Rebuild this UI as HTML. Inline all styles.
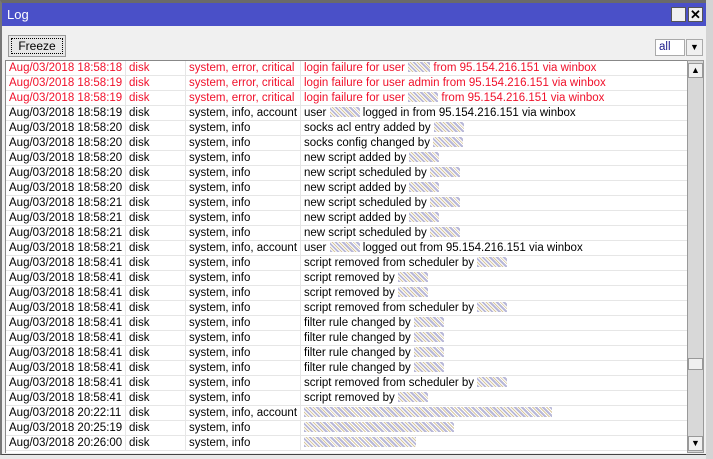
<!DOCTYPE html>
<html><head><meta charset="utf-8"><style>
*{margin:0;padding:0;box-sizing:border-box}
body{width:713px;height:459px;overflow:hidden;background:#e8e8e8;font-family:"Liberation Sans",Arial,sans-serif;font-size:11.5px;position:relative}
.win{position:absolute;left:0;top:0;width:707px;height:455px;background:#f0f0f0;border:1px solid #444;border-top:3px solid #6a6a6a;border-left:2px solid #777}
.title{position:absolute;left:0;top:0;right:0;height:23px;background:#4a50c8;color:#fff;font-size:13px;padding:4px 5px}
.tb{position:absolute;top:4px;width:15px;height:15px;background:#f0f0f0;border:1px solid #555}
.freeze{position:absolute;left:6px;top:32px;width:58px;height:22px;background:#e6e6e6;border:1px solid #999;text-align:center;line-height:20px;font-size:12px}
.freeze i{position:absolute;inset:2px;border:1px dotted #000}
.sel{position:absolute;left:653px;top:36px;width:30px;height:17px;background:#fff;border:1px solid #aaa;padding:1px 3px;color:#1a1a8a}
.selb{position:absolute;left:684px;top:36px;width:17px;height:17px;background:#f0f0f0;border:1px solid #aaa;font-size:9px;text-align:center;line-height:15px}
.list{position:absolute;left:3px;top:57px;width:682px;height:393px;background:#fff;border-top:1px solid #888;border-left:1px solid #888;overflow:hidden}
.row{height:15px;border-bottom:1px solid #e6e6e6;white-space:nowrap;position:relative;line-height:14px}
.row span{position:absolute;top:0;height:15px;border-right:1px solid #e6e6e6;padding-left:3px}
.c1{left:0;width:120px}.c2{left:120px;width:60px}.c3{left:180px;width:115px}.c4{left:295px;width:390px;border:none!important}
.red{color:#f0102a}
.r{display:inline-block;width:30px;height:10px;vertical-align:-1px;background:repeating-linear-gradient(45deg,#b8b8d8 0 2px,#fff 2px 3px,#d8c8a0 3px 4px,#fff 4px 5px)}
.sb{position:absolute;left:685px;top:57px;width:17px;height:393px;background:#d8d8d8;border:1px solid #999}
.sbb{position:absolute;left:0;width:15px;height:15px;background:#f0f0f0;border:1px solid #999;font-size:9px;text-align:center;line-height:13px}
</style></head><body>
<div class="win">
<div class="title">Log<div class="tb" style="left:669px"></div><div class="tb" style="left:686px;text-align:center;line-height:13px;color:#000;font-weight:bold">✕</div></div>
<div class="freeze"><i></i>Freeze</div>
<div class="sel">all</div><div class="selb">▼</div>
<div class="list">
<div class="row red"><span class="c1">Aug/03/2018 18:58:18</span><span class="c2">disk</span><span class="c3">system, error, critical</span><span class="c4">login failure for user <i class="r" style="width:22px"></i> from 95.154.216.151 via winbox</span></div>
<div class="row red"><span class="c1">Aug/03/2018 18:58:19</span><span class="c2">disk</span><span class="c3">system, error, critical</span><span class="c4">login failure for user admin from 95.154.216.151 via winbox</span></div>
<div class="row red"><span class="c1">Aug/03/2018 18:58:19</span><span class="c2">disk</span><span class="c3">system, error, critical</span><span class="c4">login failure for user <i class="r"></i> from 95.154.216.151 via winbox</span></div>
<div class="row"><span class="c1">Aug/03/2018 18:58:19</span><span class="c2">disk</span><span class="c3">system, info, account</span><span class="c4">user <i class="r"></i> logged in from 95.154.216.151 via winbox</span></div>
<div class="row"><span class="c1">Aug/03/2018 18:58:20</span><span class="c2">disk</span><span class="c3">system, info</span><span class="c4">socks acl entry added by <i class="r"></i></span></div>
<div class="row"><span class="c1">Aug/03/2018 18:58:20</span><span class="c2">disk</span><span class="c3">system, info</span><span class="c4">socks config changed by <i class="r"></i></span></div>
<div class="row"><span class="c1">Aug/03/2018 18:58:20</span><span class="c2">disk</span><span class="c3">system, info</span><span class="c4">new script added by <i class="r"></i></span></div>
<div class="row"><span class="c1">Aug/03/2018 18:58:20</span><span class="c2">disk</span><span class="c3">system, info</span><span class="c4">new script scheduled by <i class="r"></i></span></div>
<div class="row"><span class="c1">Aug/03/2018 18:58:20</span><span class="c2">disk</span><span class="c3">system, info</span><span class="c4">new script added by <i class="r"></i></span></div>
<div class="row"><span class="c1">Aug/03/2018 18:58:21</span><span class="c2">disk</span><span class="c3">system, info</span><span class="c4">new script scheduled by <i class="r"></i></span></div>
<div class="row"><span class="c1">Aug/03/2018 18:58:21</span><span class="c2">disk</span><span class="c3">system, info</span><span class="c4">new script added by <i class="r"></i></span></div>
<div class="row"><span class="c1">Aug/03/2018 18:58:21</span><span class="c2">disk</span><span class="c3">system, info</span><span class="c4">new script scheduled by <i class="r"></i></span></div>
<div class="row"><span class="c1">Aug/03/2018 18:58:21</span><span class="c2">disk</span><span class="c3">system, info, account</span><span class="c4">user <i class="r"></i> logged out from 95.154.216.151 via winbox</span></div>
<div class="row"><span class="c1">Aug/03/2018 18:58:41</span><span class="c2">disk</span><span class="c3">system, info</span><span class="c4">script removed from scheduler by <i class="r"></i></span></div>
<div class="row"><span class="c1">Aug/03/2018 18:58:41</span><span class="c2">disk</span><span class="c3">system, info</span><span class="c4">script removed by <i class="r"></i></span></div>
<div class="row"><span class="c1">Aug/03/2018 18:58:41</span><span class="c2">disk</span><span class="c3">system, info</span><span class="c4">script removed by <i class="r"></i></span></div>
<div class="row"><span class="c1">Aug/03/2018 18:58:41</span><span class="c2">disk</span><span class="c3">system, info</span><span class="c4">script removed from scheduler by <i class="r"></i></span></div>
<div class="row"><span class="c1">Aug/03/2018 18:58:41</span><span class="c2">disk</span><span class="c3">system, info</span><span class="c4">filter rule changed by <i class="r"></i></span></div>
<div class="row"><span class="c1">Aug/03/2018 18:58:41</span><span class="c2">disk</span><span class="c3">system, info</span><span class="c4">filter rule changed by <i class="r"></i></span></div>
<div class="row"><span class="c1">Aug/03/2018 18:58:41</span><span class="c2">disk</span><span class="c3">system, info</span><span class="c4">filter rule changed by <i class="r"></i></span></div>
<div class="row"><span class="c1">Aug/03/2018 18:58:41</span><span class="c2">disk</span><span class="c3">system, info</span><span class="c4">filter rule changed by <i class="r"></i></span></div>
<div class="row"><span class="c1">Aug/03/2018 18:58:41</span><span class="c2">disk</span><span class="c3">system, info</span><span class="c4">script removed from scheduler by <i class="r"></i></span></div>
<div class="row"><span class="c1">Aug/03/2018 18:58:41</span><span class="c2">disk</span><span class="c3">system, info</span><span class="c4">script removed by <i class="r"></i></span></div>
<div class="row"><span class="c1">Aug/03/2018 20:22:11</span><span class="c2">disk</span><span class="c3">system, info, account</span><span class="c4"><i class="r" style="width:248px"></i></span></div>
<div class="row"><span class="c1">Aug/03/2018 20:25:19</span><span class="c2">disk</span><span class="c3">system, info</span><span class="c4"><i class="r" style="width:150px"></i></span></div>
<div class="row"><span class="c1">Aug/03/2018 20:26:00</span><span class="c2">disk</span><span class="c3">system, info</span><span class="c4"><i class="r" style="width:112px"></i></span></div>
</div>
<div class="sb"><div class="sbb" style="top:2px">▲</div><div class="sbb" style="top:297px;height:12px"></div><div class="sbb" style="top:375px">▼</div></div>
</div>
<div style="position:absolute;left:706px;top:0;width:7px;height:459px;background:#d4d4d4"></div>
</body></html>
